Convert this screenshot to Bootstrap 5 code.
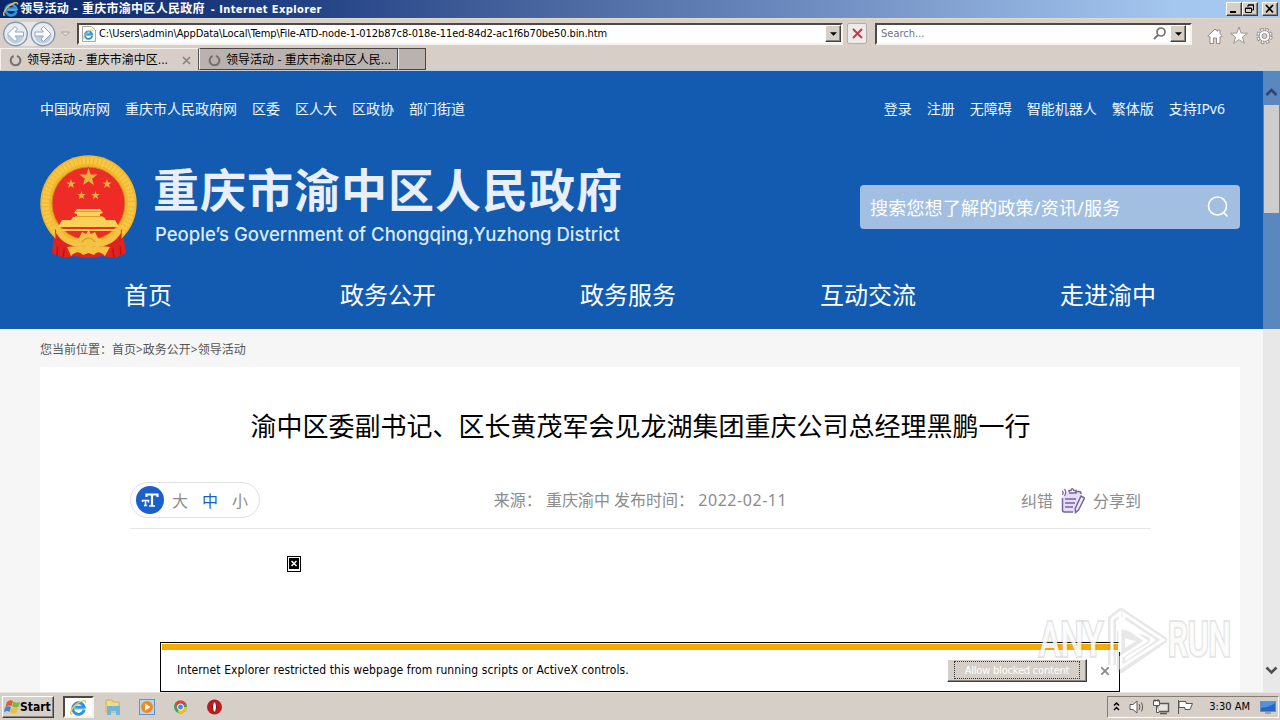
<!DOCTYPE html>
<html lang="zh-CN">
  <head>
    <meta charset="UTF-8" />
    <meta name="viewport" content="width=device-width, initial-scale=1.0" />
    <title>领导活动 - 重庆市渝中区人民政府</title>
    <!-- Bootstrap CSS -->
    <link
      href="https://cdn.jsdelivr.net/npm/bootstrap@5.3.0/dist/css/bootstrap.min.css"
      rel="stylesheet"
    />
    <style>
      body {
        height: 720px;
        font-family: "Noto Sans", "Noto Sans CJK SC", sans-serif;
        font-size: 14px;
        line-height: 1.2;
        color: #000;
        background: #f6f6f6;
      }
      svg { display: block; flex: none; }
      .chrome-font {
        font-family: "DejaVu Sans Condensed", "DejaVu Sans", "Noto Sans CJK SC", sans-serif;
        font-stretch: condensed;
        font-size: 11px;
      }
      .raised {
        background: #d6cfc8;
        border: 1px solid;
        border-color: #fff #404040 #404040 #fff;
        box-shadow: inset -1px -1px 0 #8a8580;
      }
      .sunken {
        background: #fff;
        border: 2px solid;
        border-color: #4e4846 #f6f2ee #f6f2ee #4e4846;
      }

      /* window */
      .title-bar {
        height: 18px;
        flex: none;
        padding: 0 2px 0 3px;
        background: linear-gradient(90deg, #0c2769 0, #1f3f83 22%, #49659f 42%, #7391c4 66%, #a4c7ef 92%, #a6caf0 100%);
      }
      .title-text {
        font-size: 12px;
        font-weight: 700;
        color: #fff;
        margin-left: 1px;
        letter-spacing: .28px;
      }
      .title-text .latin { font-size: 11px; letter-spacing: .4px; margin-left: 2px; }
      .win-btn { width: 16px; height: 14px; }
      .tool-bar { height: 30px; flex: none; background: #d8d0c8; padding: 0 6px 0 3px; border-top: 1px solid #dedac9; }
      .address { width: 766px; height: 22px; padding-left: 3px; }
      .address-text { padding-left: 3px; letter-spacing: -.09px; }
      .search-ie { width: 317px; height: 22px; }
      .stop-btn { width: 20px; height: 21px; background: #eeeaea; border: 1px solid #b3adab; border-radius: 2px; }
      .drop-btn { width: 16px; height: 17px; }
      .tab-row { height: 23px; flex: none; background: #d7cfc7; border-bottom: 1px solid #b9d0e6; }
      .ie-tab { width: 199px; height: 22px; font-size: 12px; padding: 2px 7px 0 8px; }
      .ie-tab span { padding-left: 5px; }
      .ie-tab.live { border: 1px solid #f5f1ed; border-right: 1px solid #555; border-bottom: 0; }
      .ie-tab.idle { background: #bab2ae; border: 1px solid #4b4644; border-left-color: #eee; padding-right: 4px; }
      .new-tab { width: 28px; height: 22px; background: #bab2ae; border: 1px solid #4b4644; border-left-color: #eee; }

      /* web page */
      .viewport { height: 621px; flex: none; }
      .site-head { height: 258px; background: #125bb0; color: #fff; }
      .top-links { padding: 28px 55px 0 40px; height: 48px; font-size: 14px; line-height: 20px; color: #eef6ff; }
      .top-links .d-flex { gap: 15px; }
      .brand { height: 145px; padding: 36px 40px 0; }
      .brand-cn {
        font-family: "Noto Sans CJK SC", sans-serif;
        font-size: 46px;
        font-weight: 700;
        line-height: 48px;
        letter-spacing: 1px;
        color: #e8eefa;
        margin-top: 8px;
      }
      .brand-en { font-family: Inter, sans-serif; font-size: 18.5px; font-weight: 500; line-height: 24px; color: #dcebfb; margin: 11px 0 0 2px; }
      .site-search { width: 380px; height: 44px; margin-top: 30px; background: #a2bfe1; border-radius: 4px; font-size: 18px; padding: 0 11px 0 10px; }
      .site-search span { padding-top: 4px; letter-spacing: .2px; }
      .main-nav { padding: 0 52px 0 28px; font-size: 24px; height: 63px; line-height: 62px; }
      .crumbs { height: 38px; padding: 0 40px; font-size: 12px; line-height: 40px; color: #555; border-top: 1px solid #fff; }
      .article { width: 1200px; margin-left: 40px; height: 325px; background: #fff; padding: 36px 89px 0 90px; }
      .headline { font-size: 26px; line-height: 44px; font-weight: 400; margin: 0; font-family: "Noto Sans CJK SC", sans-serif; white-space: nowrap; }
      .meta-row { margin-top: 35px; height: 47px; border-bottom: 1px solid #e6e6e6; font-size: 16px; color: #8c8c8c; line-height: 36px; }
      .size-pill { width: 130px; height: 36px; border: 1px solid #e0e0e0; border-radius: 18px; padding: 0 9px 0 5px; }
      .size-pill svg { margin-right: 8px; }
      .size-pill span { width: 30px; padding-top: 1px; }
      .size-pill span:last-child { width: 16px; }
      .size-pill .on { color: #1c5fc4; }
      .pub-date { letter-spacing: .55px; }
      .share-box { height: 37px; padding-right: 10px; }
      .no-image { width: 14px; height: 16px; margin: 27px 0 0 157px; }
      .ie-scroll { top: 0; right: 0; width: 17px; height: 621px; background: rgba(211, 211, 211, .375); }
      .ie-thumb { width: 15px; height: 108px; margin: 0 1px; background: #cdcdcd; }

      .info-bar { left: 160px; bottom: 0; width: 960px; height: 50px; border: 1px solid #000; background: #fff; padding: 1px; }
      .info-strip { height: 6px; background: #f5ab00; }
      .info-row { padding: 9px 9px 0 15px; }
      .info-text { font-size: 12px; letter-spacing: .1px; }
      .allow-btn { width: 140px; height: 23px; padding: 1px 6px; color: #fff; text-align: center; margin-right: 14px; }
      .allow-btn span { display: block; border: 1px dotted #333; height: 18px; line-height: 17px; font-size: 11px; letter-spacing: -.2px; }
      .watermark { left: 1034px; top: 534px; overflow: visible; }

      .task-bar { height: 28px; flex: none; background: #d6cfc8; border-top: 1px solid #e6e2de; padding: 2px 1px 1px 2px; }
      .start-btn { width: 52px; height: 22px; font-size: 12px; font-weight: 700; padding-left: 1px; }
      .task-on { width: 31px; height: 22px; margin-left: 9px; }
      .quick-icons { margin-left: 9px; }
      .tray { width: 172px; height: 22px; border: 1px solid; border-color: #837c78 #fff #fff #837c78; padding: 0 2px 0 5px; }
      .clock { margin-right: 10px; }
    </style>
  </head>
  <body class="d-flex flex-column overflow-hidden">
    <!-- shared shapes -->
    <svg width="0" height="0" class="position-absolute">
      <symbol id="ie" viewBox="0 0 18 18">
        <path d="M15 11.6A6.1 6.1 0 1 1 15 8.6H5.5" fill="none" stroke="#2f93df" stroke-width="3" />
        <path d="M4.5 10.2H16" stroke="#57b8f2" stroke-width="1.8" />
        <path d="M2.4 15.6C-1 17.5.5 11 6 6.2 11 1.8 17 .1 16.3 4" fill="none" stroke="#efc53c" stroke-width="1.5" />
      </symbol>
      <symbol id="star5" viewBox="-10 -10 20 20">
        <path d="M0-10 2.3-3.2 9.5-3.1 3.8 1.2 5.9 8.1 0 4-5.9 8.1-3.8 1.2-9.5-3.1-2.3-3.2Z" />
      </symbol>
      <symbol id="spin" viewBox="0 0 14 14">
        <path d="M8.5 2A5.2 5.2 0 1 1 5 2.2" fill="none" stroke="#77716e" stroke-width="2.2" />
      </symbol>
      <symbol id="down" viewBox="0 0 8 4"><path d="M0 0H8L4 4Z" /></symbol>
    </svg>

    <!-- window title -->
    <div class="title-bar d-flex align-items-center chrome-font">
      <svg width="16" height="16"><use href="#ie" /></svg>
      <div class="title-text text-nowrap">领导活动 - 重庆市渝中区人民政府 <span class="latin">- Internet Explorer</span></div>
      <div class="d-flex ms-auto">
        <div class="win-btn raised"><svg width="14" height="12"><path d="M3 9H9" stroke="#000" stroke-width="2" /></svg></div>
        <div class="win-btn raised"><svg width="14" height="12" fill="none" stroke="#000"><path d="M5 4V2H10.5V7H9M5 2H11M2.5 5H8.5V9.5H2.5ZM2 5.5H9" /></svg></div>
        <div class="win-btn raised ms-1"><svg width="14" height="12"><path d="M3 2 10 9.5M10 2 3 9.5" stroke="#000" stroke-width="1.7" /></svg></div>
      </div>
    </div>

    <!-- address row -->
    <div class="tool-bar d-flex align-items-center chrome-font">
      <svg width="74" height="28" viewBox="0 0 74 28">
        <path d="M13 2H40A12 12 0 0 1 40 26H13Z" fill="#e7e6e6" />
        <g fill="#e7ecf3" stroke="#8599ae" stroke-width="1.4">
          <circle cx="12.500" cy="14" r="11.8" />
          <circle cx="40" cy="14" r="11.8" />
        </g>
        <path d="M4 15A8.5 8.5 0 0 0 21 15ZM31.500 15A8.5 8.5 0 0 0 48.500 15Z" fill="#bccde0" />
        <g fill="#fff" stroke="#92a6bd">
          <path d="M4.500 14 12 6.500 14.5 9 12 12H20.500V16H12L14.5 19 12 21.500Z" />
          <path d="M48 14 40.5 6.500 38 9 40.500 12H32V16H40.500L38 19 40.5 21.500Z" />
        </g>
        <path d="M58.5 12H66.500L62.500 16Z" fill="#e5dfdb" stroke="#aaa29d" />
      </svg>
      <div class="address sunken d-flex align-items-center">
        <svg width="14" height="16" viewBox="0 0 14 16">
          <path d="M.5.5H9.500L13.500 4V15.500H.5Z" fill="#fbfbfb" stroke="#a9a9a9" />
          <use href="#ie" x="1" y="3" width="11" height="11" />
        </svg>
        <span class="address-text text-nowrap">C:\Users\admin\AppData\Local\Temp\File-ATD-node-1-012b87c8-018e-11ed-84d2-ac1f6b70be50.bin.htm</span>
        <div class="drop-btn raised ms-auto d-flex align-items-center justify-content-center"><svg width="7" height="4"><use href="#down" /></svg></div>
      </div>
      <div class="stop-btn ms-1 me-2 d-flex align-items-center justify-content-center">
        <svg width="11" height="11"><path d="M1 1 10 10M10 1 1 10" stroke="#c33d45" stroke-width="2" /></svg>
      </div>
      <div class="search-ie sunken d-flex align-items-center ps-1">
        <span class="text-secondary">Search...</span>
        <svg class="ms-auto me-1" width="13" height="13"><circle cx="8" cy="5" r="4" fill="none" stroke="#77716e" stroke-width="1.7" /><path d="M5 8 1 12" stroke="#77716e" stroke-width="2" /></svg>
        <div class="drop-btn raised me-1 d-flex align-items-center justify-content-center"><svg width="7" height="4"><use href="#down" /></svg></div>
      </div>
      <svg class="ms-auto mt-1" width="68" height="18" viewBox="0 0 68 18" fill="#fff" stroke="#948e8b">
        <path d="M.8 9 8 2 10.500 4.300V3H13V6.800L15.300 9 14 10.300 13 9.500V16.500H9.500V11H6.500V16.500H3V9.500L2 10.300Z" transform="translate(1)" />
        <use href="#star5" x="24" y="0" width="18" height="18" stroke-width="1" />
        <g transform="translate(58.500 9)">
          <circle r="6.300" fill="none" stroke-width="3.800" stroke-dasharray="3.300 1.648" />
          <circle r="6" fill="none" stroke="#fff" stroke-width="2.600" stroke-dasharray="1.700 3.012" stroke-dashoffset="-.8" />
          <circle r="5.400" />
          <circle r="2.500" fill="#d8d0c8" />
        </g>
      </svg>
    </div>

    <!-- tabs -->
    <div class="tab-row d-flex chrome-font">
      <div class="ie-tab live d-flex align-items-center">
        <svg width="13" height="13"><use href="#spin" /></svg>
        <span class="text-nowrap">领导活动 - 重庆市渝中区...</span>
        <svg class="ms-auto" width="9" height="9"><path d="M1 1 8 8M8 1 1 8" stroke="#8b8582" stroke-width="1.7" /></svg>
      </div>
      <div class="ie-tab idle d-flex align-items-center">
        <svg width="13" height="13"><use href="#spin" /></svg>
        <span class="text-nowrap">领导活动 - 重庆市渝中区人民...</span>
      </div>
      <div class="new-tab"></div>
    </div>

    <!-- page -->
    <div class="viewport position-relative overflow-hidden">
      <header class="site-head">
        <div class="top-links d-flex justify-content-between">
          <div class="d-flex"><span>中国政府网</span><span>重庆市人民政府网</span><span>区委</span><span>区人大</span><span>区政协</span><span>部门街道</span></div>
          <div class="d-flex"><span>登录</span><span>注册</span><span>无障碍</span><span>智能机器人</span><span>繁体版</span><span>支持IPv6</span></div>
        </div>
        <div class="brand d-flex">
          <svg width="97" height="105" viewBox="0 0 97 105">
            <path d="M15 72 12 98Q24 105 34 101L48 103 63 101Q75 105 86 98L82 72Z" fill="#e1231f" />
            <path d="M18 82 17 101M25 90 23 102M79 82 81 100M72 90 74 102" stroke="#b51517" stroke-width="1.500" />
            <circle cx="48.500" cy="48.500" r="48.200" fill="#f1b62c" />
            <circle cx="48.500" cy="48.500" r="43" fill="none" stroke="#f7c745" stroke-width="7" stroke-dasharray="3 1" />
            <circle cx="48.500" cy="48.500" r="36.500" fill="#ee2b26" stroke="#cf8d20" />
            <g fill="#e9b23d">
              <use href="#star5" x="39" y="13" width="19" height="19" />
              <use href="#star5" x="26" y="24" width="10" height="10" />
              <use href="#star5" x="62" y="24" width="10" height="10" />
              <use href="#star5" x="37" y="36" width="9" height="9" />
              <use href="#star5" x="51" y="36" width="9" height="9" />
            </g>
            <g fill="#fbd257">
              <path d="M37 54H60L63 58 60 59V62H64L66 65H31L33 62H37V59L34 58Z" />
              <path d="M22 65H75L79 72H18Z" />
              <path d="M21 74H77L75 76H23Z" />
            </g>
            <path d="M36 56.500H61M35 61.500H63" stroke="#e99a2c" />
            <path d="M15 74 25 86Q38 94 48 88 60 94 72 86L82 74 81 91Q66 97 57 92L48 90 40 92Q28 97 16 91Z" fill="#e1231f" />
            <g fill="#f5c344">
              <path d="M17 68 23 79Q32 87 43 87L40 92Q24 91 16 78Z" />
              <path d="M80 68 74 79Q65 87 54 87L57 92Q73 91 81 78Z" />
              <path d="M39 83 42 77 46 79 48.500 75 51 79 55 77 58 83 63 86 58 93 53 91 48.500 95 44 91 39 93 34 86Z" />
              <path d="M27 92Q41 90 45 94L48.500 93 52 94Q57 90 70 92L65 101Q58 94 54 100L48.500 98 43 100Q38 94 31 101Z" />
            </g>
            <path d="M42 87Q48.500 79 55 87" fill="none" stroke="#dc9628" stroke-width="1.200" />
          </svg>
          <div class="ms-3 ps-0">
            <div class="brand-cn text-nowrap">重庆市渝中区人民政府</div>
            <div class="brand-en text-nowrap">People’s Government of Chongqing,Yuzhong District</div>
          </div>
          <div class="site-search ms-auto d-flex align-items-center justify-content-between">
            <span>搜索您想了解的政策/资讯/服务</span>
            <svg width="22" height="24" fill="none" stroke="#fff" stroke-width="1.600"><circle cx="10.500" cy="11" r="9" /><path d="M17 18 20.500 21.500" /></svg>
          </div>
        </div>
        <nav class="main-nav d-flex text-center">
          <div class="flex-fill w-100">首页</div>
          <div class="flex-fill w-100">政务公开</div>
          <div class="flex-fill w-100">政务服务</div>
          <div class="flex-fill w-100">互动交流</div>
          <div class="flex-fill w-100">走进渝中</div>
        </nav>
      </header>

      <div class="crumbs">您当前位置：首页&gt;政务公开&gt;领导活动</div>

      <main class="article">
        <h1 class="headline text-center">渝中区委副书记、区长黄茂军会见龙湖集团重庆公司总经理黑鹏一行</h1>
        <div class="meta-row d-flex justify-content-between position-relative">
          <div class="size-pill d-flex align-items-center">
            <svg width="28" height="28" viewBox="0 0 28 28">
              <circle cx="14" cy="14" r="14" fill="#1b60ca" />
              <path d="M10.500 11V8.500H21.500V11M16 8.500V20" fill="none" stroke="#fff" stroke-width="2.200" />
              <path d="M13 20H19M6.500 16V14.500H12.500V16.500M9.500 14V19.500M8 19.500H11" fill="none" stroke="#fff" stroke-width="1.500" />
            </svg>
            <span>大</span><span class="on">中</span><span>小</span>
          </div>
          <div class="position-absolute start-50 translate-middle-x text-nowrap">来源： 重庆渝中 发布时间： <span class="pub-date">2022-02-11</span></div>
          <div class="share-box d-flex align-items-center gap-2">
            <span>纠错</span>
            <svg width="24" height="27" viewBox="0 0 24 27" fill="none" stroke="#74659f" stroke-width="1.500">
              <path d="M5 5H19V12L14 25H3Q1.500 25 1.500 23V11Z" fill="#e7dcfb" stroke="none" />
              <path d="M1.500 11V23Q1.500 25 3.500 25H12M8 5V3.500H10Q11 0 13 3.500H15V6H8M15 4.500H18Q20 4.500 20 7" />
              <path d="M4 12H15M4 16H14M4 20H12" />
              <path d="M20 9 23.500 11 17.500 23 14.500 25.500 14.300 21.500Z" fill="#f5eeff" />
              <path d="M1 4Q3 5 1.500 8M3.500 2Q6 5 3.500 9" stroke-width="1.200" />
            </svg>
            <span>分享到</span>
          </div>
        </div>
        <svg class="no-image" viewBox="0 0 14 16">
          <rect x=".5" y=".5" width="13" height="15" fill="#fff" stroke="#000" />
          <rect x="2" y="2" width="10" height="11" />
          <path d="M4.500 5 9.500 10M9.500 5 4.500 10" stroke="#fff" stroke-width="1.500" />
        </svg>
      </main>

      <div class="ie-scroll position-absolute d-flex flex-column align-items-center">
        <svg width="17" height="34"><path d="M3.500 24 8.500 19 13.500 24" fill="none" stroke="#2c466e" stroke-width="2.600" /></svg>
        <div class="ie-thumb"></div>
        <svg class="mt-auto" width="17" height="34"><path d="M3.500 9.500 8.500 14.500 13.500 9.500" fill="none" stroke="#505050" stroke-width="2.600" /></svg>
      </div>

      <div class="info-bar position-absolute chrome-font">
        <div class="info-strip"></div>
        <div class="info-row d-flex align-items-center">
          <span class="info-text text-nowrap">Internet Explorer restricted this webpage from running scripts or ActiveX controls.</span>
          <div class="allow-btn raised ms-auto"><span>Allow blocked content</span></div>
          <svg width="8" height="8"><path d="M0 0 8 8M8 0 0 8" stroke="#8d8d8d" stroke-width="1.900" /></svg>
        </div>
      </div>

      <!-- watermark -->
      <svg class="watermark position-absolute" width="204" height="72" viewBox="0 0 204 72">
        <g fill="none" stroke="#999" stroke-opacity=".24" stroke-width="8" stroke-linejoin="round">
          <path d="M78 60V14L87 7 129 35 87 64V28L112 35 87 50" />
        </g>
        <g fill="none" stroke="#fff" stroke-opacity=".95" stroke-width="3">
          <path d="M78 61V14L86 8V47M90 9 129 35 87 62V52L112 36 90 21Z" />
        </g>
        <g font-family="Roboto" font-size="48" fill="#fff" fill-opacity=".85" stroke="#999" stroke-opacity=".26" stroke-width="4" paint-order="stroke" font-weight="500">
          <text x="5" y="51" textLength="64" lengthAdjust="spacingAndGlyphs">ANY</text>
          <text x="134" y="51" textLength="63" lengthAdjust="spacingAndGlyphs">RUN</text>
        </g>
      </svg>
    </div>

    <!-- taskbar -->
    <div class="task-bar d-flex align-items-center chrome-font">
      <div class="start-btn raised d-flex align-items-center">
        <svg width="16" height="16" viewBox="0 0 16 16">
          <path d="M3 3Q6 0 9 2L7.500 7Q4 5.500 1.500 8Z" fill="#e8562a" />
          <path d="M9.500 2.500Q12 4.500 16 3L14.500 8Q11 9 8 7.500Z" fill="#78b943" />
          <path d="M1 8.500Q4 6.500 7 8L5.500 13Q3 11 0 13.500Z" fill="#3d86cf" />
          <path d="M7.700 8.500Q11 10 14 9L12.500 14Q9 15 6.200 13.500Z" fill="#f4bd31" />
        </svg>
        <span>Start</span>
      </div>
      <div class="task-on sunken d-flex align-items-center justify-content-center">
        <svg width="17" height="17"><use href="#ie" /></svg>
      </div>
      <svg class="quick-icons" width="122" height="20" viewBox="0 0 122 20">
        <!-- explorer -->
        <path d="M3 3H9L10 5H16V15H3Z" fill="#efd98b" stroke="#cdb05a" />
        <path d="M4 9H17V18H13V14H8V18H4Z" fill="#6fb6dc" />
        <!-- media player -->
        <rect x="36.500" y="2.500" width="15" height="15" fill="#bcd5ec" stroke="#5b94cf" />
        <circle cx="44" cy="10" r="6" fill="#f18a1e" />
        <path d="M42 6.500 47.500 10 42 13.500Z" fill="#fff" />
        <!-- chrome -->
        <g transform="translate(1.500)">
          <circle cx="76" cy="10" r="6.500" fill="#35a853" />
          <path d="M76 10H82.500A6.500 6.500 0 0 1 76 16.500L73 15Z" fill="#fbc116" />
          <path d="M70.300 6.800A6.500 6.500 0 0 1 82 7.500H76L74 12Z" fill="#e34133" />
          <circle cx="76" cy="10" r="3" fill="#4285f4" stroke="#fff" />
        </g>
        <!-- opera -->
        <circle cx="111.500" cy="10" r="7.500" fill="#bd1a21" />
        <ellipse cx="111.500" cy="10" rx="2" ry="5" fill="#fff" stroke="#7d090e" />
      </svg>
      <div class="tray ms-auto d-flex align-items-center">
        <svg width="84" height="18" viewBox="0 0 84 18" fill="none" stroke="#5c5754">
          <path d="M1 7.500 3.500 5 6 7.500M1 12 3.500 9.500 6 12" stroke="#000" stroke-width="1.500" />
          <path d="M17 6.500H20L24 3V15L20 11.500H17Z" fill="#fff" />
          <path d="M26 6Q28 9 26 12M28.500 4.500Q31 9 28.500 13.500" />
          <path d="M44.500 5.500H55.500V13.500H44.500ZM47 15.500H54" fill="#e8e4e0" stroke-width="1.500" />
          <path d="M40.500 2.500H46.500V7.500H40.500ZM43.500 7V14.500H46M42 1V4M45 1V4" fill="#fff" />
          <path d="M65.500 2V16M66 3.500H73V5.500H79.500L77 11.500H72V9.500H66Z" fill="#fff" />
        </svg>
        <span class="clock ms-auto text-nowrap">3:30 AM</span>
        <svg width="16" height="14" viewBox="0 0 16 14"><rect x=".5" y="1.500" width="15" height="10" fill="#2667c2" stroke="#6c8fbd" /><path d="M1 8Q8 8 15 3V2H1Z" fill="#4f92dd" /><path d="M5 13H11" stroke="#777" /></svg>
      </div>
    </div>

    <!-- Bootstrap JS and dependencies -->
    <script src="https://cdn.jsdelivr.net/npm/bootstrap@5.3.0/dist/js/bootstrap.bundle.min.js"></script>
  </body>
</html>
